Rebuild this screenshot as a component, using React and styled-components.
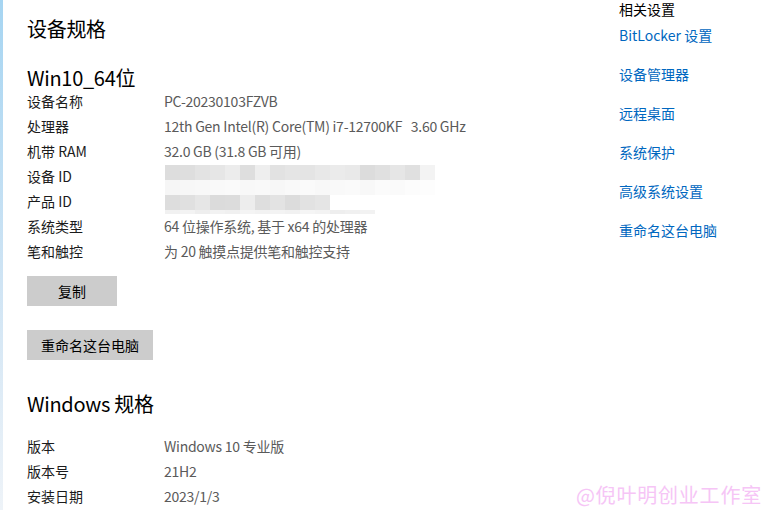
import React from "react";
import styled, { createGlobalStyle } from "styled-components";

// 系统信息页：左侧主栏 + 右侧相关设置
const GlobalStyle = createGlobalStyle`
  html, body {
    margin: 0;
    padding: 0;
    background: #ffffff;
  }
  body {
    font-family: "Noto Sans CJK SC", "Noto Sans", sans-serif;
    overflow: hidden;
  }
`;

const Page = styled.div`
  position: relative;
  display: flex;
  width: 771px;
  height: 510px;
  overflow: hidden;
  background: #fff;
`;

const Stripe = styled.div`
  width: 3px;
  flex: none;
  background: linear-gradient(180deg, #a6d5f2 0%, #cfe4f4 55%, #eef3f8 100%);
`;

const Main = styled.div`
  flex: 1;
  display: flex;
  flex-direction: column;
  align-items: flex-start;
  padding-left: 24px;
  padding-top: 15px;
`;

const Heading = styled.h2`
  margin: ${(p) => p.$mt || 0}px 0 0;
  font-size: 20px;
  font-weight: 400;
  line-height: ${(p) => p.$lh || 28}px;
  letter-spacing: -0.3px;
  color: #000;
`;

const InfoTable = styled.div`
  display: grid;
  grid-template-columns: 137px 1fr;
  margin-top: ${(p) => p.$mt || 0}px;
`;

const Label = styled.div`
  font-size: 14px;
  line-height: 25px;
  color: #1b1b1b;
  white-space: nowrap;
`;

const Value = styled.div`
  position: relative;
  font-size: 14px;
  line-height: 25px;
  height: 25px;
  letter-spacing: -0.25px;
  color: #5a5a5a;
  white-space: pre;
`;

const Mosaic = styled.div`
  position: absolute;
  left: 1px;
  top: ${(p) => p.$top}px;
  display: flex;
  flex-direction: column;
`;

const MosaicRow = styled.div`
  display: flex;
  height: ${(p) => p.$h}px;
`;

const Cell = styled.span`
  width: 15px;
  height: 100%;
`;

const GrayButton = styled.button`
  margin-top: ${(p) => p.$mt}px;
  width: ${(p) => p.$w}px;
  height: 30px;
  border: none;
  padding: 0;
  background: #cccccc;
  font-family: inherit;
  font-size: 14px;
  color: #000;
  cursor: pointer;
`;

const Side = styled.aside`
  width: 152px;
  flex: none;
  display: flex;
  flex-direction: column;
`;

const SideTitle = styled.div`
  font-size: 14px;
  line-height: 14px;
  margin-top: 2px;
  color: #000;
`;

const SideLink = styled.a`
  font-size: 14px;
  line-height: 39px;
  color: #0067c0;
  text-decoration: none;
  white-space: nowrap;
`;

const Watermark = styled.div`
  position: absolute;
  right: 9px;
  bottom: 3px;
  font-size: 20px;
  line-height: 24px;
  letter-spacing: 0.8px;
  color: #f6c5f6;
  white-space: nowrap;
`;

const rowA = ["#dddddd", "#dedede", "#e3e3e3", "#e6e6e6", "#ececec", "#dedede", "#eeeeee", "#e2e2e2", "#e5e5e5", "#e4e4e4", "#e8e8e8", "#ebebeb", "#e9e9e9", "#dcdcdc", "#e0e0e0", "#e6e6e6", "#e0e0e0", "#f3f3f3"];
const rowB = ["#f6f6f6", "#f7f7f7", "#f8f8f8", "#f9f9f9", "#fafafa", "#f8f8f8", "#f9f9f9", "#f7f7f7", "#f9f9f9", "#fafafa", "#f8f8f8", "#f9f9f9", "#fafafa", "#f8f8f8", "#fbfbfb", "#fafafa", "#fcfcfc", "#fdfdfd"];
const rowC = ["#dddddd", "#e0e0e0", "#e6e6e6", "#dbdbdb", "#dcdcdc", "#ededed", "#dedede", "#e3e3e3", "#dcdcdc", "#e2e2e2", "#e5e5e5"];
const rowD = ["#f1f1f1", "#f3f3f3", "#eeeeee", "#f2f2f2", "#f0f0f0", "#f4f4f4", "#f2f2f2", "#f3f3f3", "#f1f1f1", "#f5f5f5", "#f3f3f3", "#eeeeee", "#f0f0f0", "#f2f2f2"];

const Blur = ({ top, rows }) => (
  <Mosaic $top={top}>
    {rows.map((r, i) => (
      <MosaicRow key={i} $h={r.h}>
        {r.colors.map((c, j) => (
          <Cell key={j} style={{ background: c }} />
        ))}
      </MosaicRow>
    ))}
  </Mosaic>
);

const deviceRows = [
  ["设备名称", "PC-20230103FZVB"],
  ["处理器", "12th Gen Intel(R) Core(TM) i7-12700KF   3.60 GHz"],
  ["机带 RAM", "32.0 GB (31.8 GB 可用)"],
  ["设备 ID", "", { top: 0.5, rows: [{ h: 15, colors: rowA }, { h: 15, colors: rowB }] }],
  ["产品 ID", "", { top: 5.5, rows: [{ h: 15, colors: rowC }, { h: 4, colors: rowD }] }],
  ["系统类型", "64 位操作系统, 基于 x64 的处理器"],
  ["笔和触控", "为 20 触摸点提供笔和触控支持"],
];

const winRows = [
  ["版本", "Windows 10 专业版"],
  ["版本号", "21H2"],
  ["安装日期", "2023/1/3"],
];

const links = ["BitLocker 设置", "设备管理器", "远程桌面", "系统保护", "高级系统设置", "重命名这台电脑"];

export default function App() {
  return (
    <>
      <GlobalStyle />
      <Page>
        <Stripe />
        <Main>
          <Heading>设备规格</Heading>
          <Heading $mt={24} $lh={22}>Win10_64位</Heading>
          <InfoTable $mt={0}>
            {deviceRows.map(([k, v, blur]) => (
              <React.Fragment key={k}>
                <Label>{k}</Label>
                <Value>
                  {v}
                  {blur && <Blur top={blur.top} rows={blur.rows} />}
                </Value>
              </React.Fragment>
            ))}
          </InfoTable>
          <GrayButton $mt={12} $w={90}>复制</GrayButton>
          <GrayButton $mt={24} $w={126}>重命名这台电脑</GrayButton>
          <Heading $mt={30}>Windows 规格</Heading>
          <InfoTable $mt={16}>
            {winRows.map(([k, v]) => (
              <React.Fragment key={k}>
                <Label>{k}</Label>
                <Value>{v}</Value>
              </React.Fragment>
            ))}
          </InfoTable>
        </Main>
        <Side>
          <SideTitle>相关设置</SideTitle>
          {links.map((l) => (
            <SideLink key={l} href="#">{l}</SideLink>
          ))}
        </Side>
        <Watermark>@倪叶明创业工作室</Watermark>
      </Page>
    </>
  );
}
